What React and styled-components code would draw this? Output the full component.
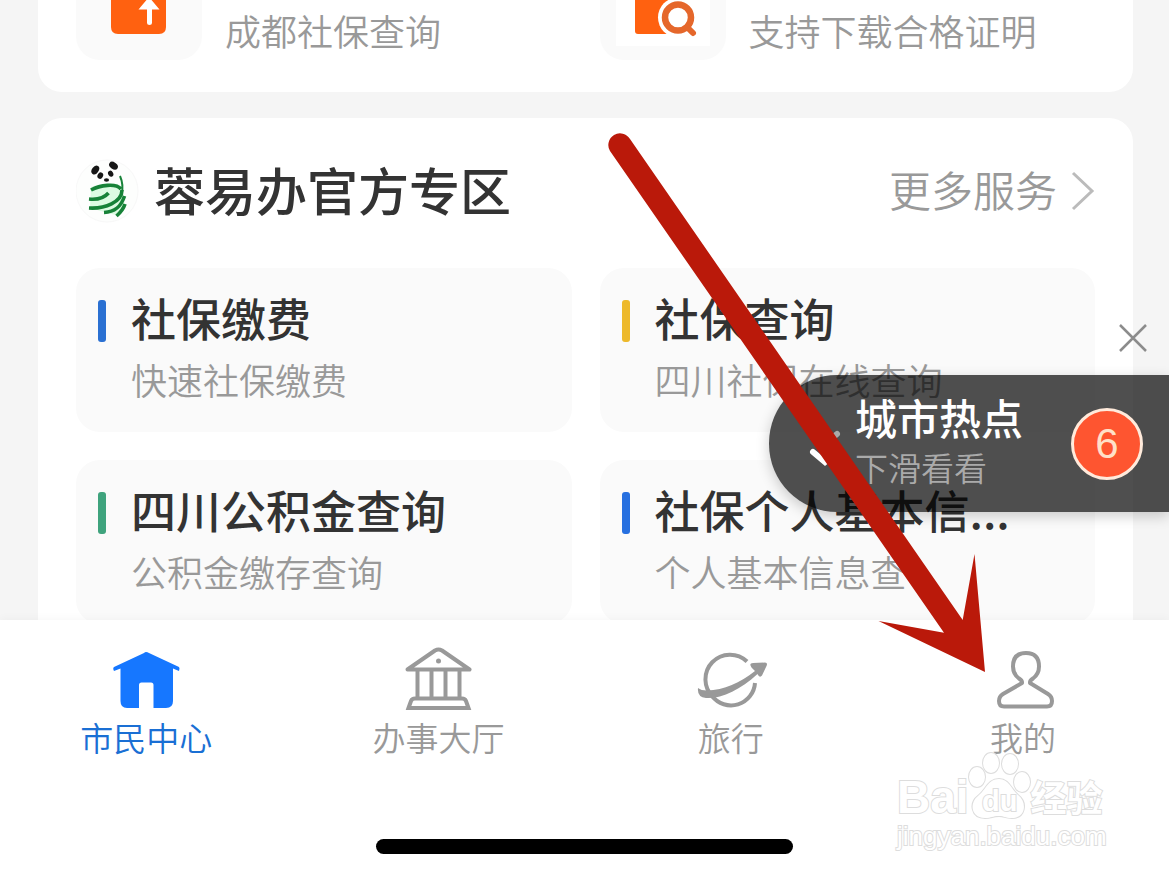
import React from 'react';
import styled, { createGlobalStyle } from 'styled-components';

const GlobalStyle = createGlobalStyle`
    * {
        box-sizing: border-box;
    }

    body {
        margin: 0;
        background: #f5f5f5;
        font-family: "Noto Sans CJK SC", "Noto Sans", sans-serif;
    }

    a {
        color: inherit;
        text-decoration: none;
    }
`;

const Screen = styled.div`
    position: relative;
    display: flex;
    flex-direction: column;
    height: 100vh;
    overflow: hidden;
`;

const Content = styled.main`
    display: flex;
    flex-direction: column;
    flex: 1;
    gap: 26px;
    min-height: 0;
    padding: 0 36px 0 38px;
    overflow: hidden;
`;

const Card = styled.section`
    flex-shrink: 0;
    padding: ${(props) => (props.$cut ? '0 38px 32px' : '38px')};
    background: #fff;
    border-radius: ${(props) => (props.$cut ? '0 0 24px 24px' : '24px')};
`;

const Columns = styled.div`
    display: grid;
    grid-template-columns: 1fr 1fr;
    gap: 28px;
`;

const Shortcut = styled.a`
    display: flex;
    align-items: center;
    gap: 23px;
    height: 60px;
    color: #999;
    font-size: 36px;
    font-weight: 350;
    line-height: 60px;
    white-space: nowrap;
`;

const ShortcutIcon = styled.svg`
    flex-shrink: 0;
    width: 126px;
    height: 60px;
    background: #fafafa;
    border-radius: 0 0 24px 24px;
`;

const Header = styled.header`
    display: flex;
    align-items: center;
    height: 70px;
    margin-bottom: 42px;
`;

const Logo = styled.svg`
    width: 64px;
    height: 64px;
    margin-right: 14px;
`;

const Title = styled.h2`
    margin: 0;
    padding-bottom: 4px;
    color: #333;
    font-size: 51px;
    font-weight: 500;
    line-height: 66px;
`;

const More = styled.a`
    display: flex;
    align-items: center;
    gap: 14px;
    margin-left: auto;
    color: #999;
    font-size: 42px;
    font-weight: 350;
    line-height: 60px;

    span {
        padding-bottom: 4px;
    }
`;

const Tile = styled.a`
    display: grid;
    grid-template-columns: 8px 1fr;
    column-gap: 25px;
    align-content: start;
    align-items: center;
    height: 164px;
    padding: 23px 22px 0;
    background: #fafafa;
    border-radius: 24px;
`;

const Bar = styled.span`
    height: 42px;
    background: ${(props) => props.$color};
    border-radius: 3px;
`;

const TileName = styled.span`
    padding-bottom: 6px;
    color: #333;
    font-size: 45px;
    font-weight: 500;
    line-height: 54px;
    white-space: nowrap;
`;

const TileNote = styled.span`
    grid-column: 2;
    color: #999;
    font-size: 36px;
    font-weight: 350;
    line-height: 56px;
    white-space: nowrap;
`;

const TabBar = styled.footer`
    position: relative;
    display: flex;
    flex-direction: column;
    align-items: center;
    gap: 80px;
    flex-shrink: 0;
    padding: 27px 0 23px;
    background: #fff;
    box-shadow: 0 -2px 8px rgba(0, 0, 0, 0.03);
`;

const Tabs = styled.nav`
    display: grid;
    grid-template-columns: repeat(4, 1fr);
    width: 100%;
`;

const Tab = styled.a`
    display: flex;
    flex-direction: column;
    align-items: center;
    gap: 4px;
    color: ${(props) => (props.$active ? '#1a6fd4' : '#999')};
    font-size: 33px;
    font-weight: 350;
    line-height: 44px;
`;

const HomeIndicator = styled.div`
    width: 417px;
    height: 15px;
    background: #000;
    border-radius: 8px;
`;

const Close = styled.button`
    position: absolute;
    top: 318px;
    right: 16px;
    display: flex;
    align-items: center;
    justify-content: center;
    width: 40px;
    height: 40px;
    padding: 0;
    background: none;
    border: 0;
`;

const HotSpot = styled.aside`
    position: absolute;
    top: 375px;
    right: 0;
    display: flex;
    align-items: center;
    width: 400px;
    height: 137px;
    padding: 0 26px 0 40px;
    background: rgba(0, 0, 0, 0.69);
    border-radius: 68px 0 0 68px;
    box-shadow: 0 4px 14px rgba(0, 0, 0, 0.2);
`;

const HotText = styled.div`
    display: flex;
    flex-direction: column;
    margin: 0 auto 0 14px;
    padding-bottom: 6px;
`;

const HotName = styled.strong`
    color: #fff;
    font-size: 42px;
    font-weight: 500;
    line-height: 52px;
`;

const HotNote = styled.span`
    color: #aaa;
    font-size: 33px;
    font-weight: 350;
    line-height: 48px;
`;

const Badge = styled.span`
    display: flex;
    align-items: center;
    justify-content: center;
    width: 72px;
    height: 72px;
    background: #fe5530;
    border: 3px solid #ffeadb;
    border-radius: 50%;
    color: #ffe0c8;
    font-family: "Liberation Sans", sans-serif;
    font-size: 42px;
`;

const Watermark = styled.div`
    position: absolute;
    top: 750px;
    right: 64px;
    width: 208px;
    color: #fff;
    font-family: "Liberation Sans", "Noto Sans CJK SC", sans-serif;
    -webkit-text-stroke: 2px #ddd;
    paint-order: stroke fill;
`;

const Brand = styled.div`
    display: flex;
    align-items: flex-end;
    height: 72px;
    font-weight: 700;
    white-space: nowrap;
`;

const BrandWord = styled.span`
    padding-bottom: 2px;
    font-size: ${(props) => (props.$cjk ? '36px' : '46px')};
    line-height: ${(props) => (props.$cjk ? '40px' : '46px')};
`;

const Paw = styled.svg`
    flex-shrink: 0;
    width: 64px;
    height: 72px;
    margin-left: -2px;
`;

const Site = styled.div`
    font-size: 26px;
    line-height: 28px;
`;

const Pointer = styled.svg`
    position: absolute;
    top: 130px;
    right: 179px;
    width: 384px;
    height: 546px;
    pointer-events: none;
`;

function PandaLogo() {
    return (
        <Logo viewBox="6 9 64 64" aria-hidden="true">
            <circle cx="37" cy="41" r="31" fill="#fdfefd" stroke="#f8f8f8" />
            <path d="M21 37 Q35 32 48 34 Q56 45 54 60 L49 66 L20 58Z" fill="#dcfbe2" />
            <g fill="#161616">
                <ellipse cx="25.300" cy="20" rx="3.300" ry="4.800" transform="rotate(35 25.300 20)" />
                <ellipse cx="43.500" cy="15.700" rx="4.800" ry="3.300" transform="rotate(35 43.500 15.700)" />
                <ellipse cx="30.300" cy="25.600" rx="2.700" ry="3.300" transform="rotate(30 30.300 25.600)" />
                <ellipse cx="40.700" cy="23.700" rx="2.500" ry="3.100" transform="rotate(-30 40.700 23.700)" />
                <ellipse cx="36.500" cy="30" rx="2.600" ry="1.700" />
            </g>
            <g fill="none" stroke="#178238" strokeWidth="3.600">
                <path d="M21 40 C30 35 46 33 51 39" />
                <path d="M19 49 C29 50 35 47 38.500 43" />
                <path d="M19 58 C35 59 52 52 52 40" />
                <path d="M34 62.500 C45 62 51 57 54.500 46" />
                <path d="M46.500 66 C51 62 53.500 59 55 54" />
            </g>
            <path d="M50 26 Q54 35 51.500 45" fill="none" stroke="#178238" strokeWidth="2" />
        </Logo>
    );
}

function HomeIcon() {
    return (
        <svg width="72" height="64" viewBox="0 0 72 64" aria-hidden="true">
            <path
                d="M36 5 Q37.500 5 39 6 L69 20 Q70 21 69 24 L63 21.500 V54 Q63 61 56 61 H43.500 V38 Q43.500 35.500 41 35.500 H31.500 Q29 35.500 29 38 V61 H17 Q10.500 61 10.500 54 V21.500 L4 24 Q2.500 21 4 20 L34 6 Q35 5 36 5Z"
                fill="#1677ff"
            />
        </svg>
    );
}

function HallIcon() {
    return (
        <svg width="72" height="64" viewBox="0 0 72 64" fill="none" stroke="#999" strokeWidth="4" aria-hidden="true">
            <path d="M5.500 22.500 L33 3.500 Q36.500 1.500 40 3.500 L67.500 22.500Z" strokeLinejoin="round" />
            <circle cx="36.500" cy="14" r="2.500" fill="#999" stroke="none" />
            <path d="M15.500 24V51 M29.500 24V51 M43.500 24V51 M57.500 24V51" />
            <path d="M6.500 61 L9 54 Q10 51.500 13 51.500 H60 Q63 51.500 64 54 L66.500 61Z" />
        </svg>
    );
}

function TravelIcon() {
    return (
        <svg width="72" height="64" viewBox="0 0 72 64" aria-hidden="true">
            <path d="M52 14.500 A24.500 24.500 0 0 0 18 50" fill="none" stroke="#999" strokeWidth="4" />
            <path d="M17 49 A24 24 0 0 0 60 36" fill="none" stroke="#999" strokeWidth="4" />
            <path d="M3 41 Q6 43.500 12 43.500 C29 43 45 36 60 24 L56.500 20.500 Q53.500 16 58 16 L70 15.500 Q73 15.500 71.500 19 L67 28.500 Q65 31 63 28 L62.500 27 C45 43 26 52 11 51 Q2 50 3 41Z" fill="#999" />
        </svg>
    );
}

function MineIcon() {
    return (
        <svg width="72" height="64" viewBox="0 0 72 64" fill="none" stroke="#999" strokeWidth="4" strokeLinejoin="round" aria-hidden="true">
            <path d="M35 36 V35 Q35 33.500 32 31.500 Q26 27 26 19.500 Q26 6 39 6 Q52 6 52 19.500 Q52 27 46 31.500 Q43 33.500 43 35 V36 L61 47 Q65 49.500 65 54 Q65 59.500 60 59.500 H17 Q12 59.500 12 54 Q12 49.500 16 47Z" />
        </svg>
    );
}

const tiles = [
    { name: '社保缴费', note: '快速社保缴费', color: '#2a70d2' },
    { name: '社保查询', note: '四川社保在线查询', color: '#edb92b' },
    { name: '四川公积金查询', note: '公积金缴存查询', color: '#3fa37d' },
    { name: '社保个人基本信...', note: '个人基本信息查', color: '#2770e0' },
];

const tabs = [
    { label: '市民中心', Icon: HomeIcon, active: true },
    { label: '办事大厅', Icon: HallIcon },
    { label: '旅行', Icon: TravelIcon },
    { label: '我的', Icon: MineIcon },
];

function App() {
    return (
        <Screen>
            <GlobalStyle />
            <Content>
                <Card $cut>
                    <Columns>
                        <Shortcut href="#query">
                            <ShortcutIcon viewBox="0 0 126 60" aria-hidden="true">
                                <path d="M35 0H90V27Q90 34 83 34H42Q35 34 35 27Z" fill="#ff6110" />
                                <path d="M73 -3L83.500 9.500H76V23Q76 25 73.500 25Q71 25 71 23V9.500H62.500Z" fill="#fff" />
                            </ShortcutIcon>
                            成都社保查询
                        </Shortcut>
                        <Shortcut href="#certificate">
                            <ShortcutIcon viewBox="0 0 126 60" aria-hidden="true">
                                <rect x="16" width="94" height="46" fill="#fff" />
                                <path d="M35 0H74V34H38Q35 34 35 31Z" fill="#ff6110" />
                                <circle cx="78" cy="17.500" r="20" fill="#fff" />
                                <circle cx="78" cy="17.500" r="13" fill="none" stroke="#e5672b" strokeWidth="6.500" />
                                <path d="M87 27L93 33" stroke="#e5672b" strokeWidth="6" strokeLinecap="round" />
                            </ShortcutIcon>
                            支持下载合格证明
                        </Shortcut>
                    </Columns>
                </Card>
                <Card>
                    <Header>
                        <PandaLogo />
                        <Title>蓉易办官方专区</Title>
                        <More href="#more">
                            <span>更多服务</span>
                            <svg width="24" height="40" viewBox="0 0 24 40" fill="none" stroke="#bbb" strokeWidth="3" aria-hidden="true">
                                <path d="M2 2L21 20L2 38" />
                            </svg>
                        </More>
                    </Header>
                    <Columns>
                        {tiles.map((tile) => (
                            <Tile href="#service" key={tile.name}>
                                <Bar $color={tile.color} />
                                <TileName>{tile.name}</TileName>
                                <TileNote>{tile.note}</TileNote>
                            </Tile>
                        ))}
                    </Columns>
                </Card>
            </Content>

            <TabBar>
                <Tabs>
                    {tabs.map(({ label, Icon, active }) => (
                        <Tab href="#tab" key={label} $active={active}>
                            <Icon />
                            {label}
                        </Tab>
                    ))}
                </Tabs>
                <HomeIndicator />
            </TabBar>

            <Close aria-label="关闭">
                <svg width="28" height="28" viewBox="0 0 28 28" stroke="#8c8c8c" strokeWidth="2.500" aria-hidden="true">
                    <path d="M1 1L27 27M27 1L1 27" />
                </svg>
            </Close>
            <HotSpot>
                <svg width="32" height="44" viewBox="0 0 32 44" fill="none" strokeWidth="6" strokeLinecap="round" aria-hidden="true">
                    <path d="M4 12L16 22L28 12" stroke="#aaa" />
                    <path d="M4 30L16 40L28 30" stroke="#fff" />
                </svg>
                <HotText>
                    <HotName>城市热点</HotName>
                    <HotNote>下滑看看</HotNote>
                </HotText>
                <Badge>6</Badge>
            </HotSpot>

            <Watermark>
                <Brand>
                    <BrandWord>Bai</BrandWord>
                    <Paw viewBox="0 0 64 72" fill="#fff" stroke="#ddd" strokeWidth="2" aria-hidden="true">
                        <ellipse cx="10" cy="27" rx="8" ry="10" />
                        <ellipse cx="24" cy="13" rx="8" ry="10" />
                        <ellipse cx="43" cy="14" rx="8" ry="10" />
                        <ellipse cx="55" cy="32" rx="8" ry="10" />
                        <path d="M32 29C42 29 44 39 51 45C61 53 58 68 45 68C37 68 38 66 32 66C25 66 25 68 18 68C4 68 2 53 11 46C19 40 21 29 32 29Z" />
                        <text x="15" y="61" fontSize="29" fontWeight="700">du</text>
                    </Paw>
                    <BrandWord $cjk>经验</BrandWord>
                </Brand>
                <Site>jingyan.baidu.com</Site>
            </Watermark>

            <Pointer viewBox="606 130 384 546" aria-hidden="true">
                <path
                    d="M610 151A11.500 11.500 0 0 1 630 139L962.700 620L974.500 554L985 672L878.500 621L944 632.700Z"
                    fill="#ba190a"
                />
            </Pointer>
        </Screen>
    );
}

export default App;
